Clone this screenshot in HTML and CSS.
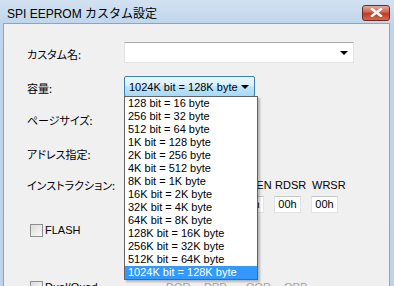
FILE: index.html
```html
<!DOCTYPE html>
<html lang="ja">
<head>
    <meta charset="UTF-8">
    <title>SPI EEPROM カスタム設定</title>
    <link rel="stylesheet" href="styles.css">
</head>
<body>
    <div class="window">
        <!-- Title bar -->
        <div class="titlebar">
            <span class="title">SPI EEPROM カスタム設定</span>
            <div class="close-btn">
                <svg width="13" height="9" viewBox="0 0 13 9">
                    <path d="M2 1 L11 8 M11 1 L2 8" stroke="#fff" stroke-width="2.4" stroke-linecap="square"/>
                </svg>
            </div>
        </div>

        <!-- Client area -->
        <div class="client">
            <div class="form-row row-name">
                <label class="lbl">カスタム名:</label>
                <div class="combo combo-wide"><span class="arrow"></span></div>
            </div>

            <div class="form-row row-size">
                <label class="lbl">容量:</label>
                <div class="combo-holder">
                    <div class="combo combo-focus">
                        <span class="combo-text">1024K bit = 128K byte</span>
                        <span class="arrow"></span>
                    </div>
                    <!-- open drop-down list -->
                    <div class="dropdown">
                        <div class="item">128 bit = 16 byte</div>
                        <div class="item">256 bit = 32 byte</div>
                        <div class="item">512 bit = 64 byte</div>
                        <div class="item">1K bit = 128 byte</div>
                        <div class="item">2K bit = 256 byte</div>
                        <div class="item">4K bit = 512 byte</div>
                        <div class="item">8K bit = 1K byte</div>
                        <div class="item">16K bit = 2K byte</div>
                        <div class="item">32K bit = 4K byte</div>
                        <div class="item">64K bit = 8K byte</div>
                        <div class="item">128K bit = 16K byte</div>
                        <div class="item">256K bit = 32K byte</div>
                        <div class="item">512K bit = 64K byte</div>
                        <div class="item selected">1024K bit = 128K byte</div>
                    </div>
                </div>
            </div>

            <div class="form-row row-page">
                <label class="lbl">ページサイズ:</label>
            </div>

            <div class="form-row row-addr">
                <label class="lbl">アドレス指定:</label>
            </div>

            <div class="form-row row-inst">
                <label class="lbl">インストラクション:</label>
                <div class="inst-grid">
                    <span class="inst-head"></span>
                    <span class="inst-head"></span>
                    <span class="inst-head"></span>
                    <span class="inst-head">WREN</span>
                    <span class="inst-head">RDSR</span>
                    <span class="inst-head">WRSR</span>
                    <span class="inst-box"></span>
                    <span class="inst-box"></span>
                    <span class="inst-box"></span>
                    <span class="inst-box">00h</span>
                    <span class="inst-box">00h</span>
                    <span class="inst-box">00h</span>
                </div>
            </div>

            <div class="check-row row-flash">
                <span class="checkbox"></span>
                <span class="check-label">FLASH</span>
            </div>

            <div class="check-row row-dual">
                <span class="checkbox"></span>
                <span class="check-label">Dual/Quad</span>
                <div class="dual-heads">
                    <span>DOR</span>
                    <span>DPP</span>
                    <span>QOR</span>
                    <span>QPP</span>
                </div>
            </div>
        </div>
    </div>
</body>
</html>
```

FILE: styles.css
```css
/* Page and window frame */
body {
    margin: 0;
    padding: 0;
    font-family: "Liberation Sans", "Noto Sans CJK JP", sans-serif;
    font-size: 11px;
    color: #000;
    background-color: #bfd4ea;
}

.window {
    width: 394px;
    height: 286px;
    overflow: hidden;
    background: linear-gradient(to bottom, #d3e2f2, #c0d5eb 24px, #bfd4ea);
    padding: 0 4px 0 3px;
    box-sizing: border-box;
}

/* Title bar */
.titlebar {
    height: 23px;
    display: flex;
    align-items: center;
    justify-content: space-between;
}

.title {
    font-family: "Liberation Sans", "Noto Sans CJK JP", sans-serif;
    font-size: 12px;
    padding-left: 4px;
    padding-top: 2px;
    color: #000;
}

.close-btn {
    width: 26px;
    height: 14px;
    margin-top: 2px;
    border: 1px solid #6b2b22;
    border-radius: 3px;
    background: linear-gradient(to bottom, #e8a89a, #d0624d 45%, #bc3a25 55%, #d46a4f);
    display: flex;
    align-items: center;
    justify-content: center;
}

/* Client area */
.client {
    height: 263px;
    background-color: #f0f0f0;
    border: 1px solid #8ea4bd;
    border-bottom: none;
    padding-left: 23px;
    box-sizing: border-box;
}

.form-row {
    display: flex;
    align-items: center;
}

.lbl {
    width: 97px;
    flex-shrink: 0;
    font-family: "Noto Sans CJK JP", sans-serif;
    font-size: 11px;
    font-feature-settings: "palt";
    padding-top: 2px;
}

.row-name {
    padding-top: 18px;
    height: 21px;
}

.row-size {
    margin-top: 13px;
    height: 21px;
}

.row-page {
    margin-top: 15px;
    height: 14px;
}

.row-addr {
    margin-top: 20px;
    height: 14px;
}

.row-inst {
    margin-top: 18px;
    align-items: flex-start;
}

.row-inst .lbl {
    line-height: 14px;
    padding-top: 0;
}

/* Combo boxes */
.combo {
    position: relative;
    height: 21px;
    box-sizing: border-box;
    background-color: #fff;
    border: 1px solid #e3e3e3;
    border-top-color: #aaa;
}

.combo-wide {
    width: 230px;
}

.combo-holder {
    position: relative;
}

.combo-focus {
    width: 131px;
    border: 1px solid #3c7fb1;
    border-radius: 2px;
    background: linear-gradient(to bottom, #eaf6fd, #d9f0fc 45%, #bee6fd 50%, #a7d9f5);
    display: flex;
    align-items: center;
    padding-left: 4px;
}

.combo-text {
    font-family: "Liberation Sans", sans-serif;
    font-size: 11px;
    flex: 1;
}

.arrow {
    position: absolute;
    right: 5px;
    top: 8px;
    width: 0;
    height: 0;
    border-left: 4px solid transparent;
    border-right: 4px solid transparent;
    border-top: 4px solid #000;
}

/* Open drop-down list (lies over the form) */
.dropdown {
    position: absolute;
    left: 0;
    top: 20px;
    width: 132px;
    background-color: #fff;
    border: 1px solid #646464;
    box-shadow: 2px 2px 2px rgba(0, 0, 0, 0.25);
    z-index: 10;
}

.item {
    display: block;
    height: 13px;
    line-height: 13px;
    padding-left: 3px;
    font-family: "Liberation Sans", sans-serif;
    font-size: 11px;
    white-space: nowrap;
}

.item.selected {
    background-color: #3399ff;
    color: #fff;
}

/* Instruction codes */
.inst-grid {
    display: grid;
    grid-template-columns: repeat(6, 27px);
    column-gap: 10px;
    row-gap: 4px;
    margin-left: 2px;
}

.inst-head {
    font-size: 11px;
    line-height: 14px;
    padding-left: 1px;
    white-space: nowrap;
}

.inst-box {
    height: 17px;
    line-height: 15px;
    background-color: #fff;
    border: 1px solid #e3e3e3;
    border-top-color: #c8c8c8;
    text-align: center;
    font-size: 11px;
    box-sizing: border-box;
}

/* Check boxes */
.check-row {
    display: flex;
    align-items: center;
    padding-left: 3px;
}

.row-flash {
    margin-top: 11px;
}

.row-dual {
    margin-top: 44px;
    align-items: flex-start;
}

.checkbox {
    width: 11px;
    height: 11px;
    flex-shrink: 0;
    border: 1px solid #8f8f8f;
    background: linear-gradient(135deg, #dcdcdc, #fafafa);
    margin-right: 2px;
}

.check-label {
    font-size: 11px;
    line-height: 13px;
}

.row-dual .check-label {
    width: 121px;
}

.dual-heads {
    display: grid;
    grid-template-columns: 38px 42px 38px 38px;
    color: #a0a0a0;
    line-height: 13px;
}
```
